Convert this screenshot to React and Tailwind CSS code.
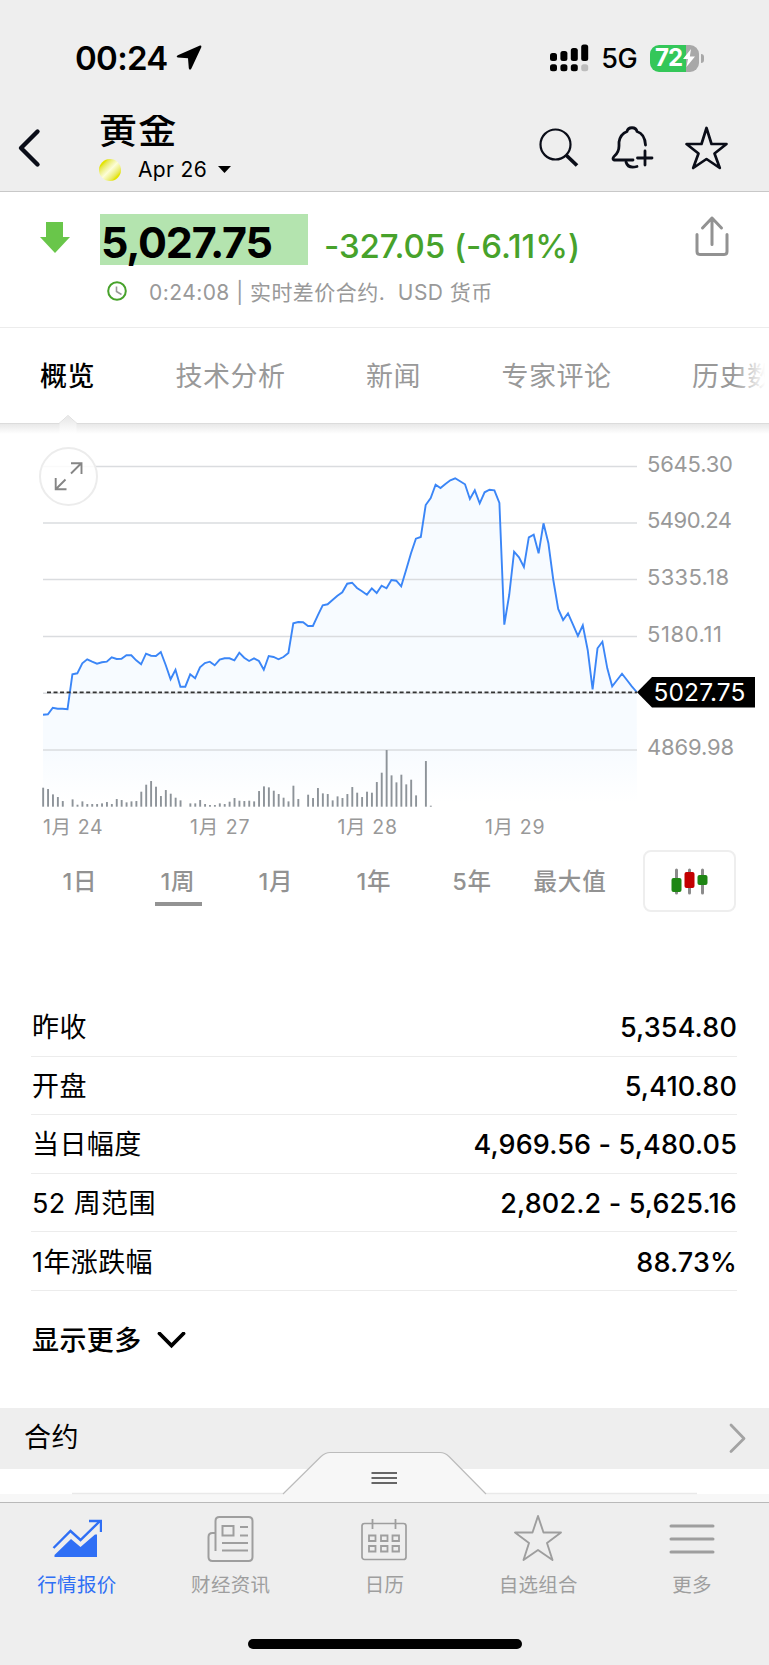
import React from "react";

const STEP = 4.907;
const LEFT = 43;
const RIGHT = 637;

// line heights, three units for each pixel
const prices = [
  854, 853, 833, 836, 836, 838, 733, 730, 700, 688, 695, 701, 697, 695, 682,
  687, 686, 676, 676, 691, 703, 671, 677, 678, 666, 705, 748, 719, 770, 770,
  733, 745, 712, 699, 695, 706, 689, 685, 685, 691, 668, 683, 693, 685, 693,
  719, 678, 681, 688, 681, 669, 580, 576, 577, 588, 588, 556, 526, 523, 510,
  497, 487, 461, 458, 474, 484, 494, 475, 489, 467, 475, 450, 452, 469, 420,
  370, 326, 321, 225, 204, 164, 174, 162, 151, 145, 154, 163, 207, 181, 220,
  187, 179, 181, 219, 584, 495, 365, 382, 411, 322, 314, 370, 280, 340, 450,
  537, 570, 550, 584, 618, 586, 660, 778, 655, 635, 715, 769, 750, 731, 750,
  769, 786,
];

const volumes = [
  57, 53, 37, 29, 17, 0, 22, 6, 16, 8, 8, 8, 10, 14, 8, 23, 20, 13, 16, 17, 45,
  66, 77, 60, 32, 50, 39, 27, 19, 0, 10, 10, 20, 8, 5, 5, 10, 8, 15, 26, 18,
  17, 18, 16, 47, 61, 58, 48, 38, 27, 16, 63, 23, 0, 36, 26, 56, 40, 38, 19,
  31, 26, 38, 59, 42, 29, 45, 42, 74, 102, 170, 94, 73, 96, 67, 81, 34, 0, 137,
  3,
];

const gridLines = [
  { y: 36.5, label: "5645.30", width: 86 },
  { y: 93, label: "5490.24", width: 85 },
  { y: 149.5, label: "5335.18", width: 82 },
  { y: 206.5, label: "5180.11", width: 75 },
  { y: 263.2, label: null },
  { y: 320, label: "4869.98", width: 87 },
];

const dates = [
  { x: 43, label: "1月 24" },
  { x: 190, label: "1月 27" },
  { x: 337.5, label: "1月 28" },
  { x: 485, label: "1月 29" },
];

const stats = [
  { label: "昨收", value: "5,354.80" },
  { label: "开盘", value: "5,410.80" },
  { label: "当日幅度", value: "4,969.56 - 5,480.05" },
  { label: "52 周范围", value: "2,802.2 - 5,625.16" },
  { label: "1年涨跌幅", value: "88.73%" },
];

const tabs = ["概览", "技术分析", "新闻", "专家评论", "历史数据"];
const ranges = ["1日", "1周", "1月", "1年", "5年", "最大值"];

function StatusBar() {
  return (
    <div className="flex h-[115px] items-start justify-between pl-[75px] pr-[65px] pt-[38px]">
      <div className="flex h-10 items-center gap-[8px]">
        <span className="pt-[1px] text-[33px] font-semibold tracking-[-0.700px]">00:24</span>
        <svg width="26" height="26" viewBox="0 0 26 26">
          <path
            d="M24 0.500 1.800 10.200q-2.200 1.400 0 2.400L12 13.200l.8 10q.8 2.800 2.600.3L25.300 2.300q.4-2.200-1.300-1.800Z"
            fill="#000"
          />
        </svg>
      </div>
      <div className="flex h-10 items-center">
        <svg width="39" height="28" viewBox="0 0 39 28">
          <rect x="0" y="9" width="7" height="8" rx="2.5" />
          <rect x="10.4" y="7" width="7" height="10" rx="2.5" />
          <rect x="20.8" y="4" width="7" height="13" rx="2.5" />
          <rect x="31.2" y="0.5" width="7" height="16.5" rx="2.5" />
          <rect x="0" y="20.3" width="7" height="7" rx="2.5" />
          <rect x="10.4" y="20.3" width="7" height="7" rx="2.5" />
          <rect x="20.8" y="20.3" width="7" height="7" rx="2.5" />
          <rect x="31.2" y="20.3" width="7" height="7" rx="2.5" fill="#bdbdbd" />
        </svg>
        <span className="ml-[12px] mr-[13px] mt-[2px] text-[27px] font-medium tracking-[-0.6px]">5G</span>
        <div className="flex h-[27px] w-[49px] items-center overflow-hidden rounded-[9px] bg-linear-to-r from-[#34c759] from-73% to-[#a8a8a8] to-73% pl-[5px]">
          <span className="text-[24px] font-bold tracking-[-1px] text-white">72</span>
          <svg className="ml-[1px] shrink-0" width="12" height="18" viewBox="0 0 12 18">
            <path d="M8 0 0 10h5L3.4 18 12 7.4H6.8Z" fill="#fff" />
          </svg>
        </div>
        <div className="ml-[2px] h-[9px] w-[3px] rounded-r-full bg-[#a8a8a8]" />
      </div>
    </div>
  );
}

function Header() {
  return (
    <div className="flex h-[77px] border-b border-[#c8c8c8]">
      <svg className="ml-[17px] mt-[13px]" width="25" height="40" viewBox="0 0 25 40">
        <path d="M20.5 3.5 4 20l16.5 16.5" fill="none" stroke="#0a0d18" strokeWidth="4.4" strokeLinecap="round" strokeLinejoin="round" />
      </svg>
      <div className="ml-[57px] w-[240px]">
        <div className="flex h-[34px] items-end overflow-hidden">
          <h1 className="-mb-[5px] text-[38px] font-medium leading-[50px] tracking-[1.200px]">黄金</h1>
        </div>
        <div className="flex h-[41px] items-center">
          <div className="h-[22px] w-[22px] rounded-full bg-linear-to-br from-[#e4e400] from-20% via-[#fdfdd8] via-50% to-[#e4e400] to-80%" />
          <span className="ml-[17px] text-[21px] tracking-[0.350px]">Apr 26</span>
          <svg className="ml-[11px]" width="13" height="7" viewBox="0 0 13 7">
            <path d="M0 0h13L6.5 7Z" />
          </svg>
        </div>
      </div>
      <svg className="ml-[199px] mt-[11px]" width="42" height="42" viewBox="0 0 42 42" fill="none" stroke="#0a0d18">
        <circle cx="17.5" cy="18.5" r="15" strokeWidth="2.2" />
        <path d="m28 29 11 10.5" strokeWidth="3.8" />
      </svg>
      <svg className="ml-[31px] mt-[10px]" width="44" height="46" viewBox="0 0 44 46" fill="none" stroke="#0a0d18" strokeWidth="2.8" strokeLinecap="round" strokeLinejoin="round">
        <path d="M22 35H3q-2-1 0-3.500 5-4 5-10.500v-4C9 11 12 8 16 6.500 17 1.500 25 1.500 26 6.500 31 8 34 12 34.500 20" />
        <path d="M15 37q2 7 11 4.500" />
        <path d="M34 26v14M26.500 33h14.500" strokeWidth="2.8" />
      </svg>
      <svg className="ml-[28px] mt-[10px]" width="46" height="46" viewBox="0 0 46 46">
        <path d="m23.500 3 5 16h15L31.500 28.500 36.800 43 23.500 34 10.200 43 15.500 28.500 3.500 19h15Z" fill="none" stroke="#0a0d18" strokeWidth="2.700" strokeLinejoin="round" />
      </svg>
    </div>
  );
}

function Quote() {
  return (
    <section className="flex h-[136px] border-b border-[#ececec] bg-white">
      <svg className="ml-[40px] mt-[30px] shrink-0" width="30" height="31" viewBox="0 0 30 31">
        <path d="M6 0h17v15h7L15 31 0 15h6Z" fill="#69c64a" />
      </svg>
      <div className="ml-[30px] w-[595px] pt-[22px]">
        <div className="flex h-[51px]">
          <div className="h-[51px] w-[208px] bg-[#b4e4af] pl-px text-[43px] font-bold leading-[57px] tracking-[-1.250px]">
            5,027.75
          </div>
          <span className="ml-[16px] whitespace-nowrap pt-[7px] text-[33px] font-medium leading-[51px] tracking-[-0.050px] text-[#47a22b]">
            -327.05 (-6.11%)
          </span>
        </div>
        <div className="flex h-[52px] items-center pl-[7px] text-[21px] text-[#999]">
          <svg width="20" height="20" viewBox="0 0 20 20" fill="none">
            <circle cx="10" cy="10" r="8.800" stroke="#47a22b" strokeWidth="2" />
            <path d="M9.500 5.500v5l5 3" stroke="#999" strokeWidth="1.600" />
          </svg>
          <span className="ml-[22px] whitespace-pre pt-[3px] tracking-[0.450px]">0:24:08 | 实时差价合约.  USD 货币</span>
        </div>
      </div>
      <svg className="mt-[23px]" width="34" height="42" viewBox="0 0 34 42" fill="none" stroke="#929292" strokeWidth="3" strokeLinecap="round" strokeLinejoin="round">
        <path d="M2 19.500v17q0 3 3 3h24q3 0 3-3v-17M17 29.500V3M7.500 13 17 3l9.500 10" />
      </svg>
    </section>
  );
}

function Tabs() {
  return (
    <div className="relative h-[95px] bg-white">
      <div className="flex h-full items-center gap-[80.500px] overflow-hidden pl-[40px] pt-[3px] text-[27px] tracking-[0.500px]">
        {tabs.map((tab, i) => (
          <span key={tab} className={i === 0 ? "shrink-0 font-medium text-black" : "shrink-0 text-[#999]"}>
            {tab}
          </span>
        ))}
      </div>
      <div className="absolute right-0 top-0 h-full w-[36px] bg-linear-to-r from-transparent to-white to-90%" />
      <svg className="absolute left-0 top-[86px]" width="769" height="22" viewBox="0 0 769 22">
        <defs>
          <linearGradient id="tabShadow" x1="0" y1="0" x2="0" y2="1">
            <stop offset="0" stopColor="#e6e6e6" />
            <stop offset="1" stopColor="#fff" />
          </linearGradient>
        </defs>
        <rect x="0" y="9" width="769" height="11" fill="url(#tabShadow)" />
        <path d="M0 9.500h59l9-8 9 8h692" fill="none" stroke="#dcdcdc" />
        <path d="m59.500 9.500 8.500-8 8.500 8v10h-17Z" fill="url(#tabShadow)" />
      </svg>
    </div>
  );
}

function Chart() {
  const points = prices
    .map((p, i) => `${Math.min(LEFT + i * STEP, RIGHT).toFixed(1)},${(p / 3).toFixed(1)}`)
    .join(" ");

  return (
    <svg className="block" width="769" height="417" viewBox="0 -7 769 417" fontFamily="Inter, 'Noto Sans CJK SC', sans-serif">
      <defs>
        <linearGradient id="area" gradientUnits="userSpaceOnUse" x1="0" y1="320" x2="0" y2="372">
          <stop offset="0" stopColor="#f7fbff" />
          <stop offset="1" stopColor="#fff" />
        </linearGradient>
      </defs>
      <polygon points={`${LEFT},377 ${points} ${RIGHT},377`} fill="url(#area)" />
      {gridLines.map((line) => (
        <g key={line.y}>
          <path d={`M${LEFT} ${line.y}H${RIGHT}`} stroke="#dadcdf" strokeWidth="1.400" />
          {line.label && (
            <text x="647" y={line.y - 1.800} dy="7" fontSize="22" fill="#999" textLength={line.width}>
              {line.label}
            </text>
          )}
        </g>
      ))}
      {volumes.map((v, i) => (
        <rect key={i} x={LEFT - 0.800 + i * STEP} y={376.700 - v / 3} width="1.900" height={v / 3} fill="#8d9399" />
      ))}
      <polyline points={points} fill="none" stroke="#3b86f7" strokeWidth="1.900" />
      <path d="M47 262.300H637" stroke="#333" strokeWidth="1.800" strokeDasharray="4 2.530" />
      <path d="M637 262.300 652 247H755V277.500H652Z" />
      <text x="653.500" y="270.500" fontSize="24.500" fill="#fff" textLength="92">5027.75</text>
      {dates.map((d) => (
        <text key={d.label} x={d.x} y="403.500" fontSize="19.500" fill="#999" textLength="59.500">
          {d.label}
        </text>
      ))}
      <circle cx="68.500" cy="46.500" r="28.500" fill="#fff" fillOpacity="0.850" stroke="#ececec" strokeWidth="2" />
      <path d="M71 43.500 81.500 33M71 33.300H81.500V44M65.500 49.500 55.500 59.500M55.700 48V59.300H66.500" fill="none" stroke="#858585" strokeWidth="1.900" />
    </svg>
  );
}

function RangePicker() {
  return (
    <div className="flex h-[82px] pl-[31px] pt-[10px]">
      {ranges.map((range) => (
        <div key={range} className="flex w-[98px] flex-col items-center">
          <span className="mt-[15px] text-[23.500px] font-medium leading-[34px] tracking-[0.800px] text-[#929292]">{range}</span>
          {range === "1周" && <div className="mt-[3px] h-[4px] w-[47px] bg-[#939393]" />}
        </div>
      ))}
      <div className="ml-[24px] flex h-[62px] w-[93px] items-center justify-center rounded-[8px] border-2 border-[#eee]">
        <svg width="37" height="27" viewBox="0 0 37 27">
          <path d="M5.500 2v23M18.500 2v23M31.500 2v23" stroke="#8b8b8b" strokeWidth="3" strokeLinecap="round" />
          <rect x="0.500" y="10" width="10" height="14" rx="2" fill="#1e8614" />
          <rect x="13.500" y="4" width="10" height="16" rx="2" fill="#c20000" />
          <rect x="26.500" y="7" width="10" height="10" rx="2" fill="#1e8614" />
        </svg>
      </div>
    </div>
  );
}

function Stats() {
  return (
    <div className="mt-[76px] pl-[31px] pr-[32px]">
      {stats.map((row) => (
        <div key={row.label} className="flex h-[58.600px] items-center justify-between border-b border-[#ececec] pt-[2px] text-[27px] leading-none">
          <span className="pl-px tracking-[0.400px]">{row.label}</span>
          <span className="font-medium tracking-[0.150px]">{row.value}</span>
        </div>
      ))}
      <div className="flex h-[100px] items-center gap-[15px] pl-px text-[27px] font-medium tracking-[0.400px]">
        显示更多
        <svg width="29" height="18" viewBox="0 0 29 18">
          <path d="m2.500 1.500 12 12 12-12" fill="none" stroke="#000" strokeWidth="3.800" strokeLinecap="round" />
        </svg>
      </div>
    </div>
  );
}

function Contracts() {
  return (
    <div className="relative mt-[17px] h-[94px] bg-white">
      <div className="flex h-[61px] items-center justify-between bg-[#eee] pl-[24px] pr-[23px]">
        <span className="text-[27px] tracking-[0.400px]">合约</span>
        <svg width="18" height="32" viewBox="0 0 18 32">
          <path d="m3 3 13 13.500L3 29.500" fill="none" stroke="#a3a3a3" strokeWidth="2.800" strokeLinecap="round" strokeLinejoin="round" />
        </svg>
      </div>
      <svg className="absolute bottom-0 left-0" width="769" height="51" viewBox="0 0 769 51">
        <path d="M0 43h283l38-37.500q4.500-4 9-4h110q5 0 9 4l37 37.500h283V51H0Z" fill="#f7f7f7" />
        <path d="M72 42.500h211M486 42.500h211" stroke="#e9e9e9" strokeWidth="1.500" />
        <path d="m283 43 38-37.500q4.500-4 9-4h110q5 0 9 4l37 37.500" fill="none" stroke="#bcbcbc" strokeWidth="1.200" />
        <path d="M371.500 22h25.500M371.500 27h25.500M371.500 32h25.500" stroke="#666" strokeWidth="1.800" />
      </svg>
    </div>
  );
}

function NavItem({ label, active, children }) {
  return (
    <div className={`flex flex-1 flex-col items-center pt-[11px] ${active ? "text-[#2f6ff5]" : "text-[#9e9e9e]"}`}>
      <svg width="50" height="50" viewBox="0 0 50 50" fill="none" stroke="currentColor" strokeWidth="2">
        {children}
      </svg>
      <span className="mt-[7px] text-[19.500px] leading-[28px] tracking-[0.300px]">{label}</span>
    </div>
  );
}

function BottomNav() {
  return (
    <nav className="flex h-[163px] flex-col items-center border-t border-[#b9b9b9] bg-[#eee]">
      <div className="flex h-[136px] w-full">
        <NavItem label="行情报价" active>
          <path d="m1.500 34 17-17 10 9L48 7M37 7h12v11" strokeWidth="2.400" />
          <path d="M2.500 41 19 25l9.500 8L43 20.500h2V43H2.500Z" fill="currentColor" stroke="none" />
        </NavItem>
        <NavItem label="财经资讯">
          <path d="M9.500 37V7q0-4 4-4h29q4 0 4 4v36q0 4-4 4h-36q-4 0-4-4V23q0-4 4-4h3M16.500 12h11v9.500h-11ZM34 13h8M34 21.500h8M16 29h26M16 36.500h26" />
        </NavItem>
        <NavItem label="日历">
          <rect x="3" y="9.500" width="44" height="36" rx="2.500" strokeWidth="1.700" />
          <path d="M13.500 5v10M36.500 5v10" strokeWidth="1.800" />
          <path d="M10 21.500h6.500V27H10ZM22 21.500h6.500V27H22ZM33.500 21.500H40V27h-6.500ZM10 32h6.500v5.500H10ZM22 32h6.500v5.500H22ZM33.500 32H40v5.500h-6.500Z" strokeWidth="1.800" />
        </NavItem>
        <NavItem label="自选组合">
          <path d="m25 2 5.500 16.500H48L34 29l5.500 17L25 36 10.500 46 16 29 2 18.500h17.500Z" strokeWidth="1.900" strokeLinejoin="round" />
        </NavItem>
        <NavItem label="更多">
          <path d="M4 12h42M4 25h42M4 38h42" strokeWidth="3" strokeLinecap="round" />
        </NavItem>
      </div>
      <div className="h-[10px] w-[274px] rounded-full bg-black" />
    </nav>
  );
}

export default function App() {
  return (
    <div className="flex h-[1665px] w-[769px] flex-col overflow-hidden bg-white font-['Inter','Noto_Sans_CJK_SC',sans-serif] text-black">
      <div className="bg-[#eee]">
        <StatusBar />
        <Header />
      </div>
      <Quote />
      <Tabs />
      <Chart />
      <RangePicker />
      <Stats />
      <Contracts />
      <BottomNav />
    </div>
  );
}
